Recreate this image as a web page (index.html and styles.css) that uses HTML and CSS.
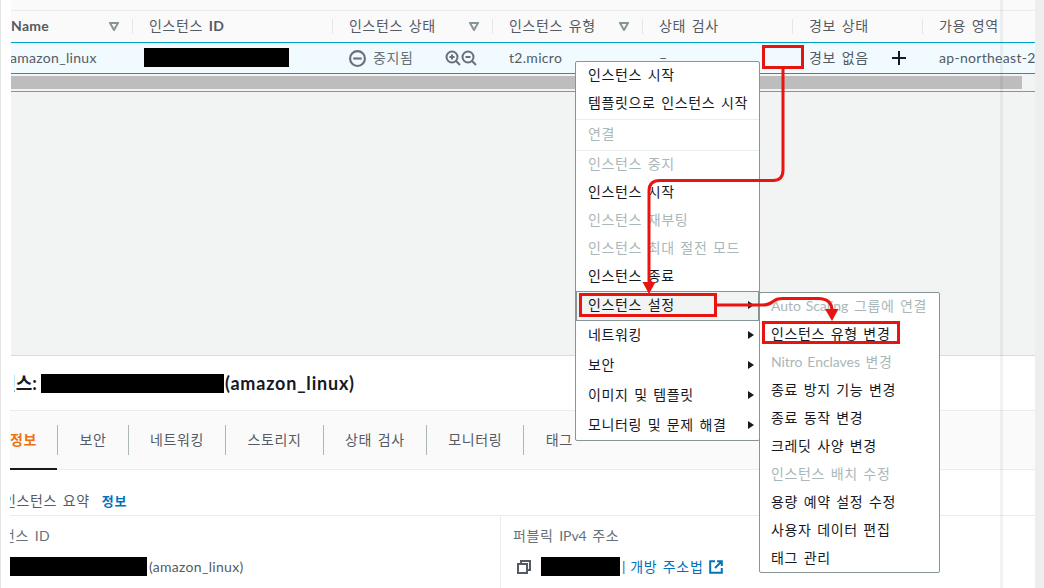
FILE: index.html
```html
<!DOCTYPE html>
<html lang="ko">
<head>
<meta charset="utf-8">
<title>EC2 인스턴스</title>
<link rel="stylesheet" href="styles.css">
</head>
<body>
<div class="frame">
  <div class="left-strip"></div>
  <main class="main">
    <div class="top-gap"></div>
    <div class="table-head">
      <div class="th first"><span class="th-label b lat">Name</span><svg class="tri" viewBox="0 0 10 9"><path d="M1 1h8L5 8z"/></svg><i class="sep"></i></div>
      <div class="th"><span class="th-label">인스턴스 <span class="b lat">ID</span></span><i class="sep"></i></div>
      <div class="th"><span class="th-label">인스턴스 상태</span><svg class="tri" viewBox="0 0 10 9"><path d="M1 1h8L5 8z"/></svg><i class="sep"></i></div>
      <div class="th"><span class="th-label">인스턴스 유형</span><svg class="tri" viewBox="0 0 10 9"><path d="M1 1h8L5 8z"/></svg><i class="sep"></i></div>
      <div class="th"><span class="th-label">상태 검사</span><i class="sep"></i></div>
      <div class="th"><span class="th-label">경보 상태</span><i class="sep"></i></div>
      <div class="th last"><span class="th-label">가용 영역</span></div>
    </div>
    <div class="table-row">
      <div class="td first-td"><span class="name-cell lat">amazon_linux</span></div>
      <div class="td"><span class="redact redact-id"></span></div>
      <div class="td status">
        <svg class="ic-stop" viewBox="0 0 16 16"><circle cx="8" cy="8" r="7"/><path d="M4 8h8"/></svg>
        <span class="status-text">중지됨</span>
        <span class="zooms">
          <svg class="ic-zoom" viewBox="0 0 16 16"><circle cx="7" cy="7" r="5.5"/><path d="M11 11l4 4M4.500 7h5M7 4.500v5"/></svg>
          <svg class="ic-zoom" viewBox="0 0 16 16"><circle cx="7" cy="7" r="5.500"/><path d="M11 11l4 4M4.500 7h5"/></svg>
        </span>
      </div>
      <div class="td lat">t2.micro</div>
      <div class="td">–</div>
      <div class="td alarm">경보 없음<svg class="ic-plus" viewBox="0 0 14 14"><path d="M7 0v14M0 7h14"/></svg></div>
      <div class="td lat">ap-northeast-2</div>
    </div>
    <section class="panel">
      <div class="scrollbar"></div>
      <div class="scroll-line"></div>
    </section>
    <h1 class="title"><span class="title-clip"><span class="title-inner">인스턴스:</span></span><span class="redact redact-title"></span><span class="title-name">(amazon_linux)</span></h1>
    <nav class="tabs">
      <span class="tab active">정보</span><i class="tab-sep"></i>
      <span class="tab">보안</span><i class="tab-sep"></i>
      <span class="tab">네트워킹</span><i class="tab-sep"></i>
      <span class="tab">스토리지</span><i class="tab-sep"></i>
      <span class="tab">상태 검사</span><i class="tab-sep"></i>
      <span class="tab">모니터링</span><i class="tab-sep"></i>
      <span class="tab">태그</span>
    </nav>
    <div class="summary-head"><span class="summary-title">인스턴스 요약</span><a class="info">정보</a></div>
    <div class="details">
      <div class="detail-col left-col">
        <div class="detail-label clip-label">인스턴스 <span class="lat">ID</span></div>
        <div class="detail-value"><span class="redact redact-detail"></span><span class="after-redact lat">(amazon_linux)</span></div>
      </div>
      <div class="detail-col">
        <div class="detail-label">퍼블릭 <span class="lat-tight">IPv4</span> 주소</div>
        <div class="detail-value ip">
          <svg class="ic-copy" viewBox="0 0 14 14"><path d="M4 3V1h9v9h-3"/><rect x="1" y="4" width="9" height="9"/></svg>
          <span class="redact redact-ip"></span><span class="pipe">|</span><a class="link">개방 주소법</a>
          <svg class="ic-ext" viewBox="0 0 14 14"><path d="M6 1.200H1.200v11.600h11.600V8M8 1.200h4.800V6M12.500 1.500L6 8"/></svg>
        </div>
      </div>
    </div>
  </main>
  <div class="gutter"></div>
</div>

<div class="band"></div>

<div class="menu menu-main">
  <div class="item">인스턴스 시작</div>
  <div class="item">템플릿으로 인스턴스 시작</div>
  <div class="rule"></div>
  <div class="item off tall">연결</div>
  <div class="rule"></div>
  <div class="item off">인스턴스 중지</div>
  <div class="item">인스턴스 시작</div>
  <div class="item off">인스턴스 재부팅</div>
  <div class="item off">인스턴스 최대 절전 모드</div>
  <div class="item">인스턴스 종료</div>
  <div class="item sub current">인스턴스 설정<i class="caret"></i></div>
  <div class="item sub">네트워킹<i class="caret"></i></div>
  <div class="item sub">보안<i class="caret"></i></div>
  <div class="item sub">이미지 및 템플릿<i class="caret"></i></div>
  <div class="item sub">모니터링 및 문제 해결<i class="caret"></i></div>
</div>

<div class="menu menu-sub">
  <div class="item off"><span><span class="lat-tight">Auto Scaling</span> 그룹에 연결</span></div>
  <div class="item">인스턴스 유형 변경</div>
  <div class="item off"><span><span class="lat-tight">Nitro Enclaves</span> 변경</span></div>
  <div class="item">종료 방지 기능 변경</div>
  <div class="item">종료 동작 변경</div>
  <div class="item">크레딧 사양 변경</div>
  <div class="item off">인스턴스 배치 수정</div>
  <div class="item">용량 예약 설정 수정</div>
  <div class="item">사용자 데이터 편집</div>
  <div class="item">태그 관리</div>
</div>

<svg class="marks" viewBox="0 0 1044 588">
  <rect class="mark" x="763.500" y="46.500" width="39" height="21"/>
  <path class="mark" d="M783 68V170Q783 180.500 773 180.500H660Q649 180.500 649 191V284"/>
  <path class="head" d="M642.500 282H655.500L649 294z"/>
  <rect class="mark" x="580.500" y="294.500" width="135" height="21"/>
  <path class="mark" d="M716 305H762Q769 305 773 301.500Q776 298.500 783 298.500H818Q832 298.500 832 311"/>
  <path class="head" d="M825 309H838.500L832 321z"/>
  <rect class="mark" x="763.500" y="322.500" width="135" height="20"/>
</svg>
</body>
</html>
```
FILE: styles.css
```css
* { box-sizing: border-box; }
html, body { margin: 0; height: 100%; overflow: hidden; }
body {
  width: 1044px;
  height: 588px;
  background: #fff;
  color: #545b64;
  font-family: Lato, "Noto Sans CJK KR", sans-serif;
  font-size: 14px;
  line-height: 20px;
  letter-spacing: .65px;
  word-spacing: 1.35px;
}
.lat { letter-spacing: .3px; }
.lat-tight { letter-spacing: -.05px; }
.frame { display: flex; width: 1044px; height: 588px; }
.left-strip { width: 10px; background: #fff; border-left: 1px solid #e6e6e6; }
.gutter { width: 9px; background: #eeeeee; }
.main { width: 1025px; overflow: hidden; display: flex; flex-direction: column; }

.top-gap { height: 11px; margin-left: 1px; background: #fafafa; border-bottom: 1px solid #eaeded; }
.table-head, .table-row {
  display: grid;
  grid-template-columns: 122px 200px 160px 150px 150px 130px 1fr;
  margin-left: 1px;
}
.table-head { height: 31px; background: #fafafa; }
.th { display: flex; align-items: center; padding-left: 16px; }
.th.first { padding-left: 0; }
.th-label { flex: 1; padding-bottom: 2px; color: #545b64; }
.b { font-weight: 700; }
.tri { width: 10px; height: 9px; margin-right: 13px; fill: none; stroke: #879596; stroke-width: 2; }
.sep { width: 1px; height: 15px; background: #e4e7e7; flex: none; }

.table-row {
  height: 32px;
  background: #f1faff;
  border-top: 1px solid #00a1c9;
  border-bottom: 1px solid #00a1c9;
}
.td { display: flex; align-items: center; padding-left: 16px; white-space: nowrap; overflow: hidden; }
.first-td { padding-left: 0; }
.name-cell { margin-left: -1px; }
.status-text { margin-left: 7px; color: #687078; width: 72px; }
.zooms { display: flex; }
.ic-stop { width: 17px; height: 17px; fill: none; stroke: #687078; stroke-width: 2; }
.ic-zoom { width: 16px; height: 16px; fill: none; stroke: #687078; stroke-width: 2; }
.ic-plus { width: 14px; height: 14px; margin-left: 23px; fill: none; stroke: #16191f; stroke-width: 2; }
.redact { display: inline-block; background: #000; height: 19px; flex: none; }
.redact-id { width: 145px; margin-left: -5px; margin-top: -1px; }

.panel { height: 282px; background: #f2f3f3; margin-left: 1px; padding-top: 2px; border-bottom: 1px solid #d8dcdc; }
.scrollbar { height: 13px; width: 1011px; background: #bdbdbd; }
.scroll-line { height: 1px; margin-top: 2px; background: #879596; }

.title {
  height: 54px;
  margin: 0;
  display: flex;
  align-items: center;
  font-size: 18px;
  letter-spacing: 0;
  font-weight: 700;
  color: #16191f;
  white-space: nowrap;
}
.title-clip { display: flex; justify-content: flex-end; overflow: hidden; width: 23px; margin-left: 4px; }
.title-inner { flex: none; }
.title-name { letter-spacing: .8px; }
.redact-title { width: 183px; margin-left: 4px; margin-right: 1px; }

.tabs {
  height: 60px;
  display: flex;
  align-items: center;
  background: #fafafa;
  border-top: 1px solid #eaeded;
  border-bottom: 1px solid #eaeded;
}
.tab {
  align-self: stretch;
  display: flex;
  align-items: center;
  padding: 0 20.900px 0 21.500px;
  border-bottom: 2px solid transparent;
  margin-bottom: -1px;
  white-space: nowrap;
}
.tab.active { padding: 0 20px 0 0; color: #ec7211; font-weight: 700; border-bottom-color: #16191f; }
.tab-sep { width: 1px; height: 30px; background: #aab7b8; flex: none; }

.summary-head {
  height: 46px;
  padding-top: 17px;
  display: flex;
  align-items: center;
  border-bottom: 1px solid #eaeded;
  white-space: nowrap;
}
.summary-title { margin-left: -7px; }
.info { margin-left: 12px; font-size: 13px; font-weight: 700; color: #0073bb; }

.details { display: grid; grid-template-columns: 491px 1fr; flex: 1; }
.detail-col { padding: 10px 0 0 12px; white-space: nowrap; overflow: hidden; }
.left-col { padding-left: 0; border-right: 1px solid #eaeded; }
.detail-label { height: 20px; color: #687078; }
.clip-label { margin-left: -35px; }
.detail-value { display: flex; align-items: center; margin-top: 11px; height: 19px; }
.redact-detail { width: 137px; }
.after-redact { margin-left: 2px; }
.ic-copy { width: 14px; height: 14px; margin-left: 4px; fill: none; stroke: #545b64; stroke-width: 2; }
.redact-ip { width: 79px; margin-left: 10px; }
.pipe { margin-left: 2px; }
.link { margin-left: 4px; color: #0073bb; }
.ic-ext { width: 14px; height: 14px; margin-left: 6px; fill: none; stroke: #0073bb; stroke-width: 2; }

.band { position: absolute; left: 1000px; top: 0; width: 3px; height: 588px; background: rgba(0, 0, 0, .05); }

.menu {
  position: absolute;
  background: #fff;
  border: 1px solid #879596;
  border-radius: 2px;
  color: #16191f;
  white-space: nowrap;
}
.menu-main { left: 575px; top: 61px; width: 185px; height: 380px; }
.menu-sub { left: 759px; top: 292px; width: 181px; height: 281px; }
.item { height: 28px; display: flex; align-items: center; padding: 0 0 2px 12px; }
.menu-sub .item { padding-left: 11px; }
.item.off { color: #aab7b8; }
.item.tall { height: 29px; }
.rule { height: 1px; margin-top: 1px; background: #eaeded; }
.item.sub { height: 30px; justify-content: space-between; padding-right: 5px; }
.item.current { margin: 1px 1px 1px; height: 28px; padding-left: 11px; padding-right: 4px; background: #f2f3f3; outline: 1px solid #879596; }
.caret {
  width: 0;
  height: 0;
  border-left: 6px solid #16191f;
  border-top: 4.500px solid transparent;
  border-bottom: 4.500px solid transparent;
}

.marks { position: absolute; left: 0; top: 0; width: 1044px; height: 588px; pointer-events: none; }
.mark { fill: none; stroke: #e8140f; stroke-width: 3; }
.head { fill: #e8140f; }
```
